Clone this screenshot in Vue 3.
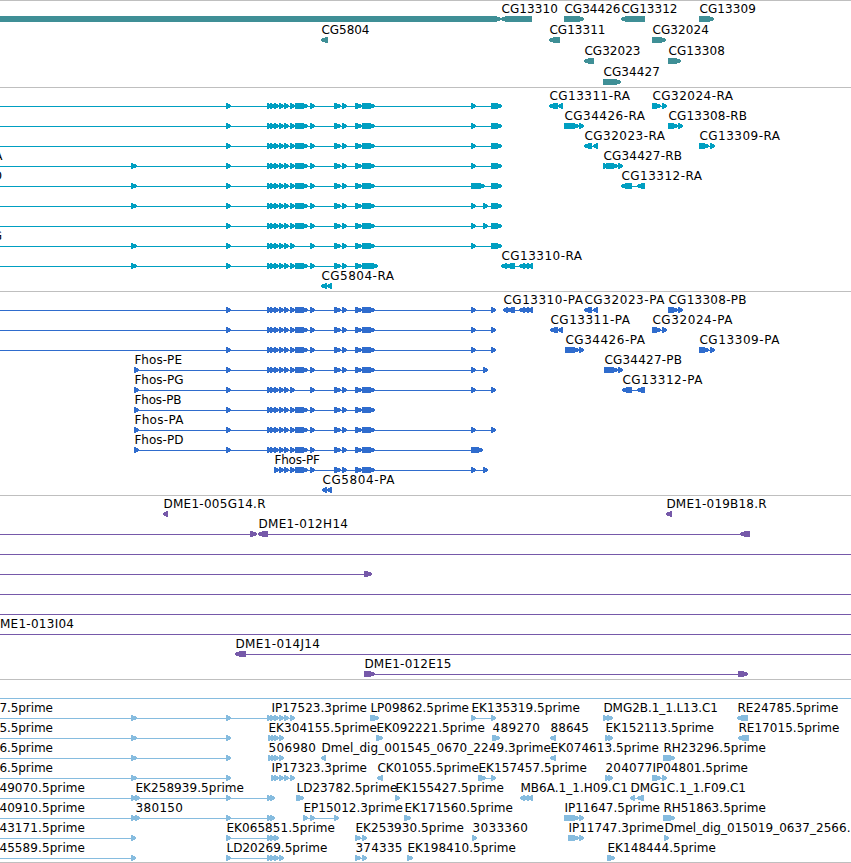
<template>
  <div class="browser">
    <section
      v-for="track in tracks"
      :key="track.name"
      class="track"
      :class="track.name"
    >
      <svg width="851" :height="track.height" :viewBox="`0 0 851 ${track.height}`">
        <g
          v-for="(row, i) in track.rows"
          :key="i"
          :transform="`translate(0 ${15 + i * track.pitch})`"
        >
          <g v-for="(item, j) in row" :key="j">
            <rect
              v-if="item.to > item.from"
              class="shape"
              :x="item.from"
              y="3"
              :width="item.to - item.from"
              height="1"
            />
            <path
              v-for="(block, k) in item.blocks"
              :key="k"
              class="shape"
              :d="arrow(block, item.dir)"
            />
            <text
              v-if="item.label"
              :x="item.x + 0.4"
              y="-3"
              :textLength="item.end - item.x + 0.1"
            >{{ item.label }}</text>
          </g>
        </g>
      </svg>
    </section>
  </div>
</template>

<script setup>
// one feature: label drawn from x to end, blocks are [start, end] pairs
function feature(label, x, end, blocks = [], dir = 1, from, to) {
  return {
    label,
    x,
    end,
    blocks,
    dir,
    from: from ?? (blocks.length ? blocks[0][0] : 0),
    to: to ?? (blocks.length ? blocks[blocks.length - 1][1] : 0)
  };
}

const line = (blocks, from = 0, to) => feature('', 0, 0, blocks, 1, from, to);
const left = (label, x, end, blocks) => feature(label, x, end, blocks, -1);

function arrow([start, end], dir) {
  const head = Math.min(5, end - start - 1);
  if (dir > 0) {
    return `M${start} 0H${end - head}L${end} 2V4L${end - head} 6H${start}Z`;
  }
  return `M${end} 0H${start + head}L${start} 2V4L${start + head} 6H${end}Z`;
}

const small = [[267, 272], [270, 275], [274, 279], [279, 284], [284, 289], [290, 295]];
const big = [[295, 308]];
const tail = [[310, 315], [334, 341], [342, 347], [355, 362]];
const exons = [...small, ...big, ...tail, [362, 375]];
const e131 = [131, 137];
const e134 = [134, 139];
const e226 = [226, 231];
const e471 = [471, 476];
const e483 = [483, 488];
const e491 = [491, 502];
const p491 = [491, 496];
const noBig = [...small, ...tail, [362, 375]];

const genes = [
  [
    line([[0, 501]]),
    left('CG13310', 501, 557.5, [[501, 532]]),
    feature('CG34426', 564, 620, [[564, 584]]),
    left('CG13312', 621, 677, [[621, 645]]),
    feature('CG13309', 699, 755.5, [[699, 714]])
  ],
  [
    left('CG5804', 321, 369, [[321, 328]]),
    left('CG13311', 549, 605, [[549, 560]]),
    feature('CG32024', 652, 708.5, [[652, 666]])
  ],
  [
    left('CG32023', 584, 640, [[584, 594]]),
    feature('CG13308', 668, 724.5, [[668, 681]])
  ],
  [feature('CG34427', 603, 659.5, [[603, 621]])]
];

const transcripts = [
  [
    line([e226, ...exons, e471, e491]),
    left('CG13311-RA', 549, 629.5, [[549, 558], [558, 563]]),
    feature('CG32024-RA', 652, 732.5, [[652, 661], [662, 667]])
  ],
  [
    line([e226, ...exons, e471, e491]),
    feature('CG34426-RA', 564, 644.5, [[564, 567], [566, 579], [579, 584]]),
    feature('CG13308-RB', 668, 746.5, [[668, 678], [678, 683]])
  ],
  [
    line([e226, ...exons, e471, e491]),
    left('CG32023-RA', 584, 664.5, [[584, 592], [593, 598]]),
    feature('CG13309-RA', 699, 779.5, [[699, 709], [710, 715]])
  ],
  [
    feature('Fhos-RA', -47, 2),
    line([e131, e226, ...exons, e471, e491]),
    feature('CG34427-RB', 603, 681.5, [[603, 606], [606, 618], [618, 623]])
  ],
  [
    feature('Fhos-RD', -47, 1.5),
    line([e131, e226, ...exons, [471, 485], e491]),
    left('CG13312-RA', 621, 701.5, [[621, 632], [637, 645]])
  ],
  [line([e131, e226, ...exons, e471, e483, e491])],
  [line([e226, ...exons, e471, e483, e491])],
  [
    feature('Fhos-RG', -47, 1.5),
    line([e131, e226, ...noBig, e471, e491])
  ],
  [
    line([e131, e226, ...small, ...big, ...tail, [362, 378]]),
    left('CG13310-RA', 501, 581.5, [[501, 507], [506, 515], [519, 525], [524, 529], [528, 533]])
  ],
  [left('CG5804-RA', 321, 393.5, [[321, 327], [327, 332]])]
];

const proteins = [
  [
    line([e226, ...exons, e471, p491]),
    left('CG13310-PA', 503, 582.5, [[503, 508], [507, 515], [519, 525], [524, 529], [528, 533]]),
    left('CG32023-PA', 584, 664, [[584, 592], [593, 598]]),
    feature('CG13308-PB', 668, 746, [[668, 678], [678, 683]])
  ],
  [
    line([e226, ...exons, e471, p491]),
    left('CG13311-PA', 550, 629.5, [[550, 558], [558, 563]]),
    feature('CG32024-PA', 652, 732, [[652, 661], [662, 667]])
  ],
  [
    line([e226, ...exons, e471, p491]),
    feature('CG34426-PA', 565, 644.5, [[565, 579], [579, 584]]),
    feature('CG13309-PA', 699, 779, [[699, 709], [710, 715]])
  ],
  [
    feature('Fhos-PE', 134, 181.5, [e134, e226, ...exons, e471, e483]),
    feature('CG34427-PB', 604, 681.5, [[604, 607], [606, 618], [618, 623]])
  ],
  [
    feature('Fhos-PG', 134, 183, [e134, e226, ...noBig, e471, p491]),
    left('CG13312-PA', 622, 702, [[622, 632], [637, 645]])
  ],
  [feature('Fhos-PB', 134, 181, [e134, e226, ...exons])],
  [feature('Fhos-PA', 134, 183, [e134, e226, ...exons, e471, p491])],
  [feature('Fhos-PD', 134, 183, [e134, e226, ...exons, [471, 483]])],
  [feature('Fhos-PF', 274, 319.5, [...exons.slice(2), e471, e483])],
  [left('CG5804-PA', 322, 394, [[322, 327], [327, 332]])]
];

const bacs = [
  [
    left('DME1-005G14.R', 163, 265, [[163, 168]]),
    left('DME1-019B18.R', 666, 766, [[666, 672]])
  ],
  [
    line([[250, 257]]),
    left('DME1-012H14', 258, 347.5, [[258, 268], [740, 750]])
  ],
  [line([], 0, 851)],
  [line([[364, 372]])],
  [line([], 0, 851)],
  [line([], 0, 851)],
  [feature('DME1-013I04', -10, 73.5, [], 1, 0, 851)],
  [feature('DME1-014J14', 235, 319.5, [[235, 246]], -1, 235, 851)],
  [feature('DME1-012E15', 364, 451, [[364, 375], [738, 748]])]
];

const ests = [
  [line([], 0, 851)],
  [
    feature('7.5prime', -1, 52.5, [e131, e226, ...small], 1, 0),
    feature('IP17523.3prime', 271, 366.5),
    feature('LP09862.5prime', 370, 468.5, [[370, 379]]),
    feature('EK135319.5prime', 471, 579.5, [e471, p491]),
    feature('DMG2B.1_1.L13.C1', 603, 717.5, [[603, 608], [607, 613]]),
    left('RE24785.5prime', 737, 838, [[737, 748]])
  ],
  [
    feature('5.5prime', -1, 52.5, [e131, e226], 1, 0),
    feature('EK304155.5prime', 268, 376.5, [[268, 273], [271, 276], [274, 279], [279, 284]]),
    feature('EK092221.5prime', 376, 484.5, [[376, 383]]),
    feature('489270', 492, 539.5, [[492, 500]]),
    left('88645', 550, 588.5, [[550, 556]]),
    feature('EK152113.5prime', 605, 713.5, [[605, 609], [608, 613]]),
    left('RE17015.5prime', 738, 839, [[738, 749]])
  ],
  [
    feature('6.5prime', -1, 52.5, [e131, e226], 1, 0),
    feature('506980', 268, 315.5, [[268, 273], [271, 276], [274, 279], [279, 284]]),
    left('Dmel_dig_001545_0670_2249.3prime', 321, 550.5, [[321, 326]]),
    left('EK074613.5prime', 550, 658.5, [[550, 556]]),
    feature('RH23296.5prime', 663, 765.5, [[663, 675]])
  ],
  [
    feature('6.5prime', -1, 52.5, [e131, e226], 1, 0),
    feature('IP17323.3prime', 271, 366.5, [[271, 276], [274, 279], [279, 284], [284, 289], [290, 295]]),
    left('CK01055.5prime', 377, 478.5, [[377, 383]]),
    feature('EK157457.5prime', 478, 586.5, [[478, 486], p491]),
    feature('204077', 605, 652, [[605, 609], [608, 613]]),
    feature('IP04801.5prime', 652, 747.5, [[652, 661], [662, 667]])
  ],
  [
    feature('49070.5prime', -1, 84.5, [[131, 136], [135, 140], e226, [267, 272], [270, 275]], 1, 0),
    feature('EK258939.5prime', 135, 243.5),
    feature('LD23782.5prime', 296, 397, [[296, 304]]),
    feature('EK155427.5prime', 395, 503.5, [[395, 400]]),
    left('MB6A.1_1.H09.C1', 520, 627.5, [[520, 525], [524, 529], [528, 533]]),
    left('DMG1C.1_1.F09.C1', 630, 745.5, [[630, 635], [637, 644]])
  ],
  [
    feature('40910.5prime', -1, 84.5, [[131, 136], [135, 140], e226, [267, 272], [270, 275]], 1, 0),
    feature('380150', 135, 182.5),
    feature('EP15012.3prime', 303, 402.5, [[303, 308], [310, 315], [334, 339]]),
    feature('EK171560.5prime', 404, 512.5, [[404, 411]]),
    feature('IP11647.5prime', 564, 659.5, [[564, 567], [566, 579], [579, 584]]),
    feature('RH51863.5prime', 663, 765.5, [[663, 675]])
  ],
  [
    feature('43171.5prime', -1, 84.5, [[131, 136]], 1, 0),
    feature('EK065851.5prime', 226, 334.5, [e226, ...small.slice(0, 3)]),
    feature('EK253930.5prime', 355, 463.5, [[355, 361], [362, 367]]),
    feature('3033360', 472, 527.5, [[472, 477]]),
    feature('IP11747.3prime', 568, 663.5, [[568, 579], [579, 584]]),
    feature('Dmel_dig_015019_0637_2566.', 664, 850, [[664, 669]])
  ],
  [
    feature('45589.5prime', -1, 84.5, [[131, 136]], 1, 0),
    feature('LD20269.5prime', 226, 327, [e226, ...small.slice(0, 4)]),
    feature('374335', 355, 402, [[355, 361], [362, 367]]),
    feature('EK198410.5prime', 407, 515.5, [[407, 413]]),
    feature('EK148444.5prime', 607, 715.5, [[607, 615]])
  ]
];

const tracks = [
  { name: 'genes', height: 86, pitch: 21, rows: genes },
  { name: 'transcripts', height: 203, pitch: 20, rows: transcripts },
  { name: 'proteins', height: 203, pitch: 20, rows: proteins },
  { name: 'bacs', height: 183, pitch: 20, rows: bacs },
  { name: 'ests', height: 182, pitch: 20, rows: ests }
];
</script>

<style scoped>
.browser {
  width: 851px;
  background: #fff;
  border-bottom: 1px solid #bfbfbf;
  overflow: hidden;
}

.track {
  border-top: 1px solid #bfbfbf;
}

.track svg {
  display: block;
}

.shape {
  fill: currentColor;
  shape-rendering: crispEdges;
}

text {
  fill: #000;
  font-family: "DejaVu Sans", sans-serif;
  font-size: 12px;
}

.genes { color: #3f8f96; }
.transcripts { color: #009fc1; }
.proteins { color: #2f6ccd; }
.bacs { color: #7659a9; }
.ests { color: #86bcdf; }
</style>

<style>
body {
  background: #fff;
  overflow: hidden;
}
</style>
